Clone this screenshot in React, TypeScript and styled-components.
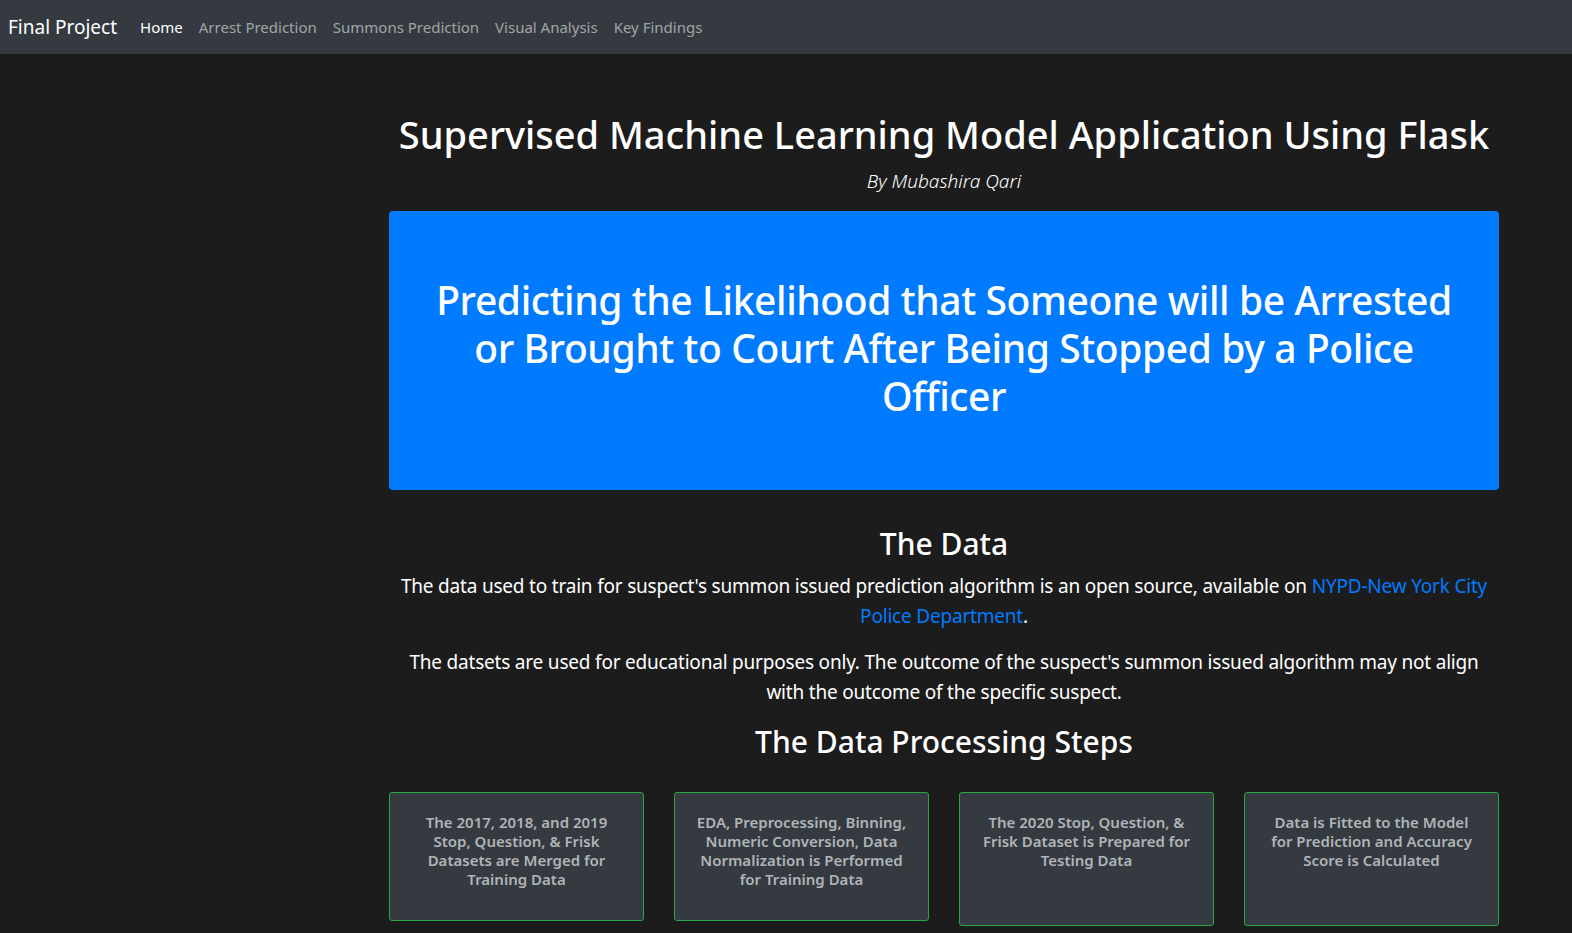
import styled, { createGlobalStyle } from "styled-components";

const GlobalStyle = createGlobalStyle`
  html, body {
    margin: 0;
    padding: 0;
    background: #1c1c1c;
    font-family: "Noto Sans", "Open Sans", sans-serif;
    color: #fff;
  }
`;

const Navbar = styled.nav`
  height: 54px;
  background: #343a40;
  display: flex;
  align-items: center;
  padding: 0 8px;
`;

const Brand = styled.a`
  font-size: 19px;
  color: #fff;
  margin-right: 15px;
  text-decoration: none;
`;

const NavLink = styled.a<{ $active?: boolean }>`
  font-size: 15px;
  color: ${(p) => (p.$active ? "#fff" : "rgba(255,255,255,0.55)")};
  padding: 0 8px;
  text-decoration: none;
`;

const Page = styled.div`
  display: grid;
  grid-template-columns: 389px 1110px;
  padding-top: 56px;
`;

const Main = styled.main`
  grid-column: 2;
  text-align: center;
`;

const Title = styled.h1`
  font-size: 38px;
  font-weight: 500;
  line-height: 48px;
  margin: 0;
  white-space: nowrap;
`;

const Byline = styled.p`
  font-style: italic;
  font-weight: 300;
  font-size: 19px;
  margin: 10px 0 17px;
`;

const Jumbo = styled.section`
  background: #007bff;
  border-radius: 4px;
  height: 279px;
  display: flex;
  align-items: center;
  justify-content: center;
  padding: 0 30px;
`;

const Headline = styled.h2`
  font-size: 39px;
  font-weight: 500;
  line-height: 48px;
  letter-spacing: -0.4px;
  margin: 0 0 6px;
`;

const SectionTitle = styled.h2<{ $top?: number }>`
  font-size: 30px;
  font-weight: 500;
  line-height: 38px;
  margin: ${(p) => p.$top ?? 35}px 0 8px;
`;

const Para = styled.p`
  font-size: 19px;
  line-height: 30px;
  letter-spacing: -0.2px;
  margin: 0 0 16px;
`;

const Link = styled.a`
  color: #007bff;
  text-decoration: none;
`;

const Steps = styled.div`
  display: grid;
  grid-template-columns: repeat(4, 1fr);
  gap: 30px;
  margin-top: 31px;
  align-items: start;
`;

const Card = styled.div<{ $tall?: boolean }>`
  background: #343a40;
  border: 1px solid #28a745;
  border-radius: 3px;
  height: ${(p) => (p.$tall ? 134 : 129)}px;
  box-sizing: border-box;
  padding: 20px 20px;
  color: #b0b4b8;
  font-size: 15px;
  font-weight: 600;
  line-height: 19px;
`;

const steps = [
  "The 2017, 2018, and 2019 Stop, Question, & Frisk Datasets are Merged for Training Data",
  "EDA, Preprocessing, Binning, Numeric Conversion, Data Normalization is Performed for Training Data",
  "The 2020 Stop, Question, & Frisk Dataset is Prepared for Testing Data",
  "Data is Fitted to the Model for Prediction and Accuracy Score is Calculated",
];

export default function App() {
  return (
    <>
      <GlobalStyle />
      <Navbar>
        <Brand href="#">Final Project</Brand>
        <NavLink $active href="#">Home</NavLink>
        <NavLink href="#">Arrest Prediction</NavLink>
        <NavLink href="#">Summons Prediction</NavLink>
        <NavLink href="#">Visual Analysis</NavLink>
        <NavLink href="#">Key Findings</NavLink>
      </Navbar>
      <Page>
        <Main>
          <Title>Supervised Machine Learning Model Application Using Flask</Title>
          <Byline>By Mubashira Qari</Byline>
          <Jumbo>
            <Headline>
              Predicting the Likelihood that Someone will be Arrested or Brought to Court After Being Stopped by a Police Officer
            </Headline>
          </Jumbo>
          <SectionTitle>The Data</SectionTitle>
          <Para>
            The data used to train for suspect's summon issued prediction algorithm is an open source, available on{" "}
            <Link href="#">NYPD-New York City Police Department</Link>.
          </Para>
          <Para>
            The datsets are used for educational purposes only. The outcome of the suspect's summon issued algorithm may not align with the outcome of the specific suspect.
          </Para>
          <SectionTitle $top={13}>The Data Processing Steps</SectionTitle>
          <Steps>
            {steps.map((s, i) => (
              <Card key={i} $tall={i > 1}>{s}</Card>
            ))}
          </Steps>
        </Main>
      </Page>
    </>
  );
}
